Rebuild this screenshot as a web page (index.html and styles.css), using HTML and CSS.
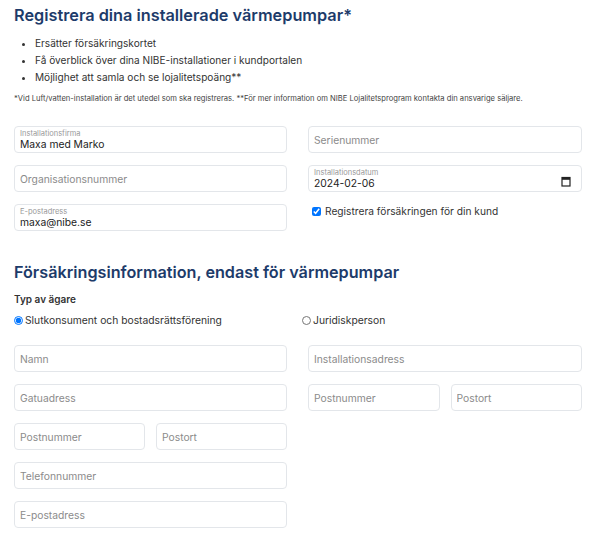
FILE: index.html
```html
<!DOCTYPE html>
<html lang="sv">
  <head>
    <meta charset="UTF-8" />
    <meta name="viewport" content="width=device-width, initial-scale=1.0" />
    <title>Registrera värmepumpar</title>
    <link rel="stylesheet" href="styles.css">
  </head>
  <body>
    <main class="page">
      <h1 class="Heading">Registrera dina installerade värmepumpar*</h1>
      <ul class="Perks">
        <li>Ersätter försäkringskortet</li>
        <li>Få överblick över dina NIBE-installationer i kundportalen</li>
        <li>Möjlighet att samla och se lojalitetspoäng**</li>
      </ul>
      <p class="Footnote">*Vid Luft/vatten-installation är det utedel som ska registreras. **För mer information om NIBE Lojalitetsprogram kontakta din ansvarige säljare.</p>

      <div class="Grid">
        <div class="Col">
          <label class="Field Filled">
            <span class="FieldLabel">Installationsfirma</span>
            <input type="text" value="Maxa med Marko" />
          </label>
          <div class="Field"><input type="text" placeholder="Organisationsnummer" /></div>
          <label class="Field Filled">
            <span class="FieldLabel">E-postadress</span>
            <input type="text" value="maxa@nibe.se" />
          </label>
        </div>
        <div class="Col">
          <div class="Field"><input type="text" placeholder="Serienummer" /></div>
          <label class="Field Filled Date">
            <span class="FieldLabel">Installationsdatum</span>
            <input type="text" value="2024-02-06" />
            <svg class="CalIcon" width="10" height="11" viewBox="0 0 10 11">
              <rect x="1" y="1.5" width="8" height="8.5" fill="none" stroke="#222" stroke-width="1.2"/>
              <rect x="1" y="1.5" width="8" height="2.3" fill="#222"/>
            </svg>
          </label>
          <label class="Check">
            <input type="checkbox" checked />
            <span>Registrera försäkringen för din kund</span>
          </label>
        </div>
      </div>

      <h2 class="SubHeading">Försäkringsinformation, endast för värmepumpar</h2>
      <p class="OwnerTitle">Typ av ägare</p>
      <div class="Grid Radios">
        <label class="Radio"><input type="radio" name="owner" checked /><span>Slutkonsument och bostadsrättsförening</span></label>
        <label class="Radio Second"><input type="radio" name="owner" /><span>Juridiskperson</span></label>
      </div>

      <div class="Grid Lower">
        <div class="Col">
          <div class="Field"><input type="text" placeholder="Namn" /></div>
          <div class="Field"><input type="text" placeholder="Gatuadress" /></div>
          <div class="Pair">
            <div class="Field"><input type="text" placeholder="Postnummer" /></div>
            <div class="Field"><input type="text" placeholder="Postort" /></div>
          </div>
          <div class="Field"><input type="text" placeholder="Telefonnummer" /></div>
          <div class="Field"><input type="text" placeholder="E-postadress" /></div>
        </div>
        <div class="Col">
          <div class="Field"><input type="text" placeholder="Installationsadress" /></div>
          <div class="Pair">
            <div class="Field"><input type="text" placeholder="Postnummer" /></div>
            <div class="Field"><input type="text" placeholder="Postort" /></div>
          </div>
        </div>
      </div>
    </main>
  </body>
</html>
```

FILE: styles.css
```css
* {
  box-sizing: border-box;
}
body {
  margin: 0;
  background: #fff;
  color: #333;
  font-family: Inter, "Open Sans", sans-serif;
}
.page {
  width: 582px;
  padding: 0 0 0 14px;
}
.Heading {
  margin: 3px 0 0 0;
  font-size: 16.3px;
  line-height: 24px;
  font-weight: 600;
  color: #1d3b6a;
}
.Perks {
  margin: 8px 0 0 0;
  padding-left: 21px;
  font-size: 10.1px;
  line-height: 17px;
  color: #333;
}
.Footnote {
  margin: 7px 0 0 0;
  font-size: 7.6px;
  line-height: 12px;
  color: #444;
}
.Grid {
  display: grid;
  grid-template-columns: 273px 274px;
  column-gap: 21px;
  margin-top: 21px;
}
.Col {
  display: flex;
  flex-direction: column;
  gap: 12px;
}
.Field {
  position: relative;
  display: flex;
  flex-direction: column;
  justify-content: center;
  height: 27px;
  border: 1px solid #e3e6ea;
  border-radius: 4px;
  background: #fff;
  padding: 0 5px;
}
.Field input {
  border: none;
  outline: none;
  padding: 0;
  margin: 0;
  width: 100%;
  font-family: inherit;
  font-size: 10.3px;
  color: #222;
  background: transparent;
}
.Field input::placeholder {
  color: #8b8b8b;
}
.Filled {
  justify-content: flex-start;
  padding-top: 2px;
}
.Filled input {
  line-height: 13px;
  height: 13px;
}
.FieldLabel {
  font-size: 7.5px;
  line-height: 9px;
  color: #999;
}
.CalIcon {
  position: absolute;
  right: 10px;
  top: 10px;
}
.Check {
  display: flex;
  align-items: center;
  gap: 4px;
  padding: 1px 0 0 4px;
  font-size: 10.2px;
  color: #333;
}
.Check input {
  margin: 0;
  width: 9px;
  height: 9px;
}
.SubHeading {
  margin: 30px 0 0 0;
  font-size: 16.2px;
  line-height: 22px;
  font-weight: 600;
  color: #1d3b6a;
}
.OwnerTitle {
  margin: 9px 0 0 0;
  font-size: 10px;
  line-height: 14px;
  font-weight: 600;
  color: #333;
}
.Radios {
  margin-top: 7px;
}
.Radio {
  display: flex;
  align-items: center;
  gap: 2px;
  font-size: 10.3px;
  line-height: 14px;
  color: #333;
}
.Radio input {
  margin: 0;
  width: 9px;
  height: 9px;
}
.Second {
  margin-left: -6px;
}
.Lower {
  margin-top: 18px;
}
.Pair {
  display: grid;
  grid-template-columns: 1fr 1fr;
  column-gap: 11px;
}
```
